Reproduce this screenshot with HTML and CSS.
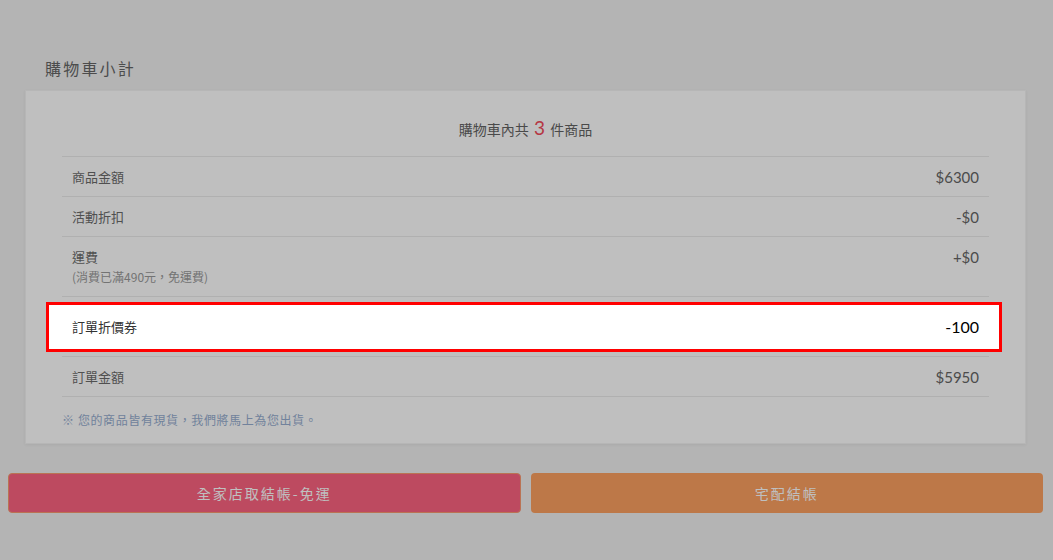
FILE: index.html
```html
<!DOCTYPE html>
<html lang="zh-Hant">
<head>
  <meta charset="UTF-8">
  <meta name="viewport" content="width=device-width, initial-scale=1.0">
  <title>購物車小計</title>
  <link rel="stylesheet" href="styles.css">
</head>
<body>
  <div class="wrap">
    <h2 class="title">購物車小計</h2>

    <div class="card">
      <div class="count">購物車內共 <span class="num">3</span> 件商品</div>

      <div class="row">
        <div class="label">商品金額</div>
        <div class="value">$6300</div>
      </div>
      <div class="row">
        <div class="label">活動折扣</div>
        <div class="value">-$0</div>
      </div>
      <div class="row before-coupon">
        <div class="label">
          運費
          <div class="sub">(消費已滿490元，免運費)</div>
        </div>
        <div class="value">+$0</div>
      </div>
      <div class="row coupon">
        <div class="label">訂單折價券</div>
        <div class="value">-100</div>
      </div>
      <div class="row last">
        <div class="label">訂單金額</div>
        <div class="value">$5950</div>
      </div>

      <p class="note">※ 您的商品皆有現貨，我們將馬上為您出貨。</p>
    </div>

    <div class="actions">
      <button class="btn btn-store">全家店取結帳-免運</button>
      <button class="btn btn-home">宅配結帳</button>
    </div>
  </div>

  <!-- 導覽遮罩，折價券那列浮在上面 -->
  <div class="mask"></div>
</body>
</html>
```

FILE: styles.css
```css
body {
  margin: 0;
  background: #f0f0f0;
  font-family: "Noto Sans CJK TC", "Noto Sans", sans-serif;
  color: #6b6b6b;
}
.wrap {
  margin: 0 10px 0 8px;
  padding-top: 56px;
}
.title {
  margin: 0 0 10px 37px;
  font-size: 16px;
  font-weight: normal;
  letter-spacing: 2.2px;
  line-height: 24px;
  color: #666;
}
.card {
  margin: 0 17px;
  padding: 0 36px 13px;
  background: #fff;
  border: 1px solid #f3f3f3;
  box-shadow: 0 1px 3px rgba(0, 0, 0, 0.06);
}
.count {
  padding: 22px 0 12px;
  text-align: center;
  font-size: 14px;
  line-height: 30px;
  color: #636363;
}
.count .num {
  font-family: Lato, sans-serif;
  font-size: 19px;
  color: #f24a5a;
  margin: 0 2px;
}
.row {
  display: flex;
  justify-content: space-between;
  padding: 10px 10px 9px;
  border-top: 1px solid #ebebeb;
  font-size: 13px;
  line-height: 20px;
}
.row.before-coupon,
.row.last {
  border-bottom: 1px solid #ebebeb;
}
.label {
  color: #6b6b6b;
}
.sub {
  font-size: 12px;
  color: #9a9a9a;
}
.value {
  font-family: Lato, sans-serif;
  font-size: 15px;
  color: #666;
}
.row.coupon {
  position: relative;
  z-index: 1001;
  padding: 20px 10px 19px;
  border-top: none;
}
.row.coupon::before {
  content: "";
  position: absolute;
  top: 5px;
  bottom: 4px;
  left: -16px;
  right: -13px;
  background: #fff;
  border: 3px solid #ff0000;
  z-index: -1;
}
.row.coupon .label {
  color: #333;
}
.row.coupon .value {
  font-size: 16px;
  color: #000;
}
.note {
  margin: 13px 0 0;
  font-size: 12px;
  line-height: 20px;
  letter-spacing: 0.6px;
  color: #97aed0;
}
.actions {
  display: flex;
  gap: 10px;
  margin-top: 29px;
}
.btn {
  flex: 1;
  height: 40px;
  border: 1px solid transparent;
  border-radius: 4px;
  color: #fff;
  font-family: inherit;
  font-size: 14px;
  letter-spacing: 2px;
  cursor: pointer;
}
.btn-store {
  background: #fd6380;
  border-color: #f99a70;
}
.btn-home {
  background: #fda060;
}
.mask {
  position: fixed;
  top: 0;
  left: 0;
  right: 0;
  bottom: 0;
  background: rgba(0, 0, 0, 0.25);
  z-index: 1000;
}
```
